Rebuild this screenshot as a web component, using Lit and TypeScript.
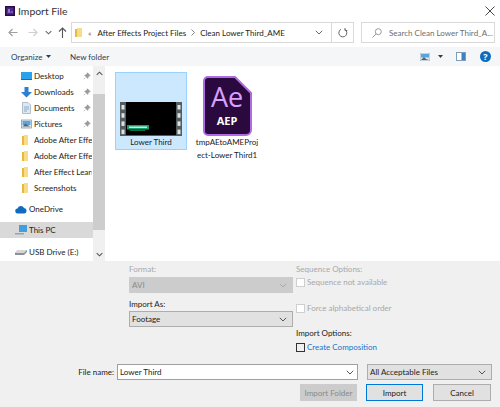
import { LitElement, css, html, svg } from 'lit'
import { customElement } from 'lit/decorators.js'

const folderIcon = svg`<svg class="ico" width="11" height="12" viewBox="0 0 11 12"><path d="M1 2h3l1 1v8H1z" fill="#e8b93f"/><path d="M3 1h4v10H3z" fill="#f7dc8a"/></svg>`

const navItems = [
  { label: 'Desktop', pin: true, icon: svg`<svg class="ico" width="11" height="12" viewBox="0 0 11 12"><rect x="0" y="2" width="11" height="7" fill="#2aa1ec"/><rect x="0" y="9" width="11" height="1" fill="#0f6fb5"/></svg>` },
  { label: 'Downloads', pin: true, icon: svg`<svg class="ico" width="11" height="12" viewBox="0 0 11 12"><path d="M3.500 1h4v5H11l-5.500 5.500L0 6h3.500z" fill="#2b80d5"/></svg>` },
  { label: 'Documents', pin: true, icon: svg`<svg class="ico" width="11" height="12" viewBox="0 0 11 12"><path d="M1.500 .5h5.500l2.500 2.500v8.500h-8z" fill="#dfe7ef" stroke="#9fb0c0" stroke-width=".8"/><path d="M3 5h5M3 7h5M3 9h3" stroke="#6f9fc8" stroke-width=".8"/></svg>` },
  { label: 'Pictures', pin: true, icon: svg`<svg class="ico" width="11" height="12" viewBox="0 0 11 12"><rect x=".4" y="2" width="10" height="8" fill="#dfe8ef" stroke="#8c9aa6" stroke-width=".8"/><rect x="1.500" y="3" width="8" height="4" fill="#5aa6dc"/><path d="M1.500 8.500l3-3 2 1.500 3 1.500z" fill="#56636e"/></svg>` },
  { label: 'Adobe After Effects 2020', icon: folderIcon },
  { label: 'Adobe After Effects CC', icon: folderIcon },
  { label: 'After Effect Learning', icon: folderIcon },
  { label: 'Screenshots', icon: folderIcon },
]

const pin = svg`<svg class="pin" width="8" height="8" viewBox="0 0 10 10"><path d="M5.500 1l3.500 3.500-1 .5-1.500 1-.5 2-4-4 2-.5 1-1.500zM3 7L1 9" fill="#9a9a9a" stroke="#8f8f8f" stroke-width=".7"/></svg>`

const chevron = svg`<svg class="chev" width="8" height="5" viewBox="0 0 8 5"><path d="M.8 .8L4 4l3.200-3.200" fill="none" stroke="#555" stroke-width="1"/></svg>`

@customElement('app-root')
class AppRoot extends LitElement {
  strip(x: number) {
    return [0, 1, 2, 3].map((i) => svg`<rect x=${x + 1.5} y=${3 + i * 8.2} width="3" height="4.500" fill="#dde3e6"/>`)
  }

  render() {
    return html`
      <div class="title">
        <svg width="10" height="10" viewBox="0 0 10 10"><rect width="10" height="10" fill="#2a0b4a"/><rect x="1.500" y="1.500" width="7" height="7" fill="#4b2a8a"/><path d="M3 7l1-4 1 4M6 6h2" stroke="#c9a2ff" fill="none" stroke-width=".7"/></svg>
        <span>Import File</span>
        <svg class="close" width="10" height="10" viewBox="0 0 10 10"><path d="M.5 .5l9 9M9.500 .5l-9 9" stroke="#333" stroke-width=".9"/></svg>
      </div>

      <div class="address">
        <div class="navs">
          <svg width="10" height="9" viewBox="0 0 10 9"><path d="M9.500 4.500H1M4.500 1L1 4.500 4.500 8" fill="none" stroke="#a0a0a0" stroke-width="1.200"/></svg>
          <svg class="fwd" width="10" height="9" viewBox="0 0 10 9"><path d="M.5 4.500H9M5.500 1L9 4.500 5.500 8" fill="none" stroke="#d0d0d0" stroke-width="1.200"/></svg>
          <svg class="down" width="7" height="5" viewBox="0 0 8 5"><path d="M.8 .8L4 4l3.200-3.200" fill="none" stroke="#666" stroke-width="1.200"/></svg>
          <svg class="up" width="9" height="11" viewBox="0 0 9 11"><path d="M4.500 11V1M1 4.500L4.500 1 8 4.500" fill="none" stroke="#555" stroke-width="1.100"/></svg>
        </div>
        <div class="box path">
          <svg width="8" height="10" viewBox="0 0 8 10"><path d="M0 1h2v8H0z" fill="#e8b93f"/><path d="M2 0h5v9H2z" fill="#f7dc8a"/></svg>
          <span class="crumbs dim">«</span>
          <span class="crumb">After Effects Project Files</span>
          <svg class="sep" width="4" height="7" viewBox="0 0 4 7"><path d="M.5 .5l3 3-3 3" fill="none" stroke="#666" stroke-width=".8"/></svg>
          <span class="crumb">Clean Lower Third_AME</span>
          <svg class="pathchev" width="8" height="5" viewBox="0 0 8 5"><path d="M.8 .8L4 4l3.200-3.200" fill="none" stroke="#666" stroke-width="1"/></svg>
          <div class="refresh">
            <svg width="10" height="10" viewBox="0 0 10 10"><path d="M3 1.300A4 4 0 1 0 7 1.500M7 0v2.500h2.300" fill="none" stroke="#666" stroke-width="1"/></svg>
          </div>
        </div>
        <div class="box search">
          <svg width="10" height="10" viewBox="0 0 10 10"><circle cx="6.300" cy="3.700" r="3" fill="none" stroke="#999"/><path d="M4 6L.5 9.500" stroke="#999"/></svg>
          <span>Search Clean Lower Third_A...</span>
        </div>
      </div>

      <div class="toolbar">
        <span class="organize">Organize</span>
        <svg class="caret" width="5" height="3" viewBox="0 0 5 3"><path d="M0 0h5L2.500 3z" fill="#1f3f60"/></svg>
        <span class="newfolder">New folder</span>
        <div class="tools">
          <svg width="10" height="8" viewBox="0 0 10 8"><rect width="10" height="8" fill="#dfe8ef" stroke="#8c9aa6" stroke-width=".6"/><rect x="1" y="1" width="8" height="3.500" fill="#5aa6dc"/><path d="M1 7l3-3 2 2 3 1z" fill="#56636e"/></svg>
          <svg class="tcaret" width="5" height="3" viewBox="0 0 5 3"><path d="M0 0h5L2.500 3z" fill="#1f3f60"/></svg>
          <svg class="panes" width="10" height="9" viewBox="0 0 10 9"><rect x=".5" y=".5" width="9" height="8" fill="#fff" stroke="#7f9db9"/><rect x="5.500" y="1" width="3.500" height="7" fill="#3f80c0"/></svg>
          <svg class="help" width="11" height="11" viewBox="0 0 11 11"><circle cx="5.500" cy="5.500" r="5.500" fill="#0f6cbd"/><text x="5.500" y="8.800" text-anchor="middle" font-size="9" font-weight="700" fill="#fff" font-family="Open Sans, sans-serif">?</text></svg>
        </div>
      </div>

      <div class="main">
        <div class="side">
          <div class="list">
            ${navItems.map(
              (n) => html`<div class="nav">${n.icon}<span class="lbl">${n.label}</span>${n.pin ? pin : ''}</div>`
            )}
            <div class="nav root first">
              <svg class="ico" width="12" height="9" viewBox="0 0 12 9"><path d="M3 8.500a2.500 2.500 0 0 1-.5-5A3.500 3.500 0 0 1 9 3a2.800 2.800 0 0 1 .5 5.500z" fill="#0f6cbd"/></svg>
              <span class="lbl">OneDrive</span>
            </div>
            <div class="nav root sel">
              <svg class="ico" width="12" height="11" viewBox="0 0 12 11"><rect x="4" y="0" width="8" height="7" fill="#3f9fe0"/><path d="M0 8h9v1.500H0z" fill="#9aa3aa"/></svg>
              <span class="lbl">This PC</span>
            </div>
            <div class="nav root usb">
              <svg class="ico" width="12" height="6" viewBox="0 0 12 6"><path d="M0 4l3-3h9v2L9 6H0z" fill="#8e9296"/><path d="M3 1h9L9 4H0z" fill="#d4d6d8"/></svg>
              <span class="lbl">USB Drive (E:)</span>
            </div>
          </div>
          <div class="scroll">
            <svg width="7" height="5" viewBox="0 0 8 5"><path d="M.8 4.200L4 1l3.200 3.200" fill="none" stroke="#555" stroke-width="1.200"/></svg>
            <div class="thumb"></div>
            <svg width="7" height="5" viewBox="0 0 8 5"><path d="M.8 .8L4 4l3.200-3.200" fill="none" stroke="#555" stroke-width="1.200"/></svg>
          </div>
        </div>
        <div class="files">
          <div class="tile selected">
            <svg class="film" width="62" height="34" viewBox="0 0 62 34">
              <rect width="62" height="34" fill="#555c5e"/>
              <rect x="6" width="50" height="33" fill="#000"/>
              ${this.strip(0)}
              ${this.strip(56)}
              <rect x="7" y="23" width="22" height="4.500" fill="#14a06a"/>
              <rect x="9" y="24.500" width="18" height="1.500" fill="#c9f0dd"/>
              <rect x="10" y="28" width="15" height="1" fill="#0d6d49"/>
            </svg>
            <div class="name">Lower Third</div>
          </div>
          <div class="tile">
            <svg class="ae" width="49" height="60" viewBox="0 0 49 60">
              <path d="M5 1h27l16 16v37a5 5 0 0 1-5 5H5a4 4 0 0 1-4-4V5a4 4 0 0 1 4-4z" fill="#2a0a3e" stroke="#b06be0" stroke-width="2"/>
              <text x="24" y="31" text-anchor="middle" font-size="27" font-weight="500" fill="#d9a0ff" font-family="Open Sans, sans-serif">Ae</text>
              <text x="24" y="49" text-anchor="middle" font-size="11" font-weight="700" fill="#fff" font-family="Open Sans, sans-serif">AEP</text>
            </svg>
            <div class="name two">tmpAEtoAMEProj<br />ect-Lower Third1</div>
          </div>
        </div>
      </div>

      <div class="panel">
        <div class="opts">
          <div class="col left">
            <div class="cap off">Format:</div>
            <div class="select off-sel"><span>AVI</span>${chevron}</div>
            <div class="cap second">Import As:</div>
            <div class="select"><span>Footage</span>${chevron}</div>
          </div>
          <div class="col right">
            <div class="cap off">Sequence Options:</div>
            <label class="check off seq"><i></i>Sequence not available</label>
            <label class="check off force"><i></i>Force alphabetical order</label>
            <div class="cap imp">Import Options:</div>
            <label class="check on"><i></i>Create Composition</label>
          </div>
        </div>
        <div class="namerow">
          <span class="fl">File name:</span>
          <div class="input"><span>Lower Third</span>${chevron}</div>
          <div class="select types"><span>All Acceptable Files</span>${chevron}</div>
        </div>
        <div class="buttons">
          <div class="btn disabled">Import Folder</div>
          <div class="btn primary">Import</div>
          <div class="btn">Cancel</div>
        </div>
      </div>
    `
  }

  static styles = css`
    :host {
      display: block;
      width: 500px;
      height: 407px;
      overflow: hidden;
      background: #fff;
      color: #222;
      font-family: 'Lato', 'Open Sans', sans-serif;
      font-size: 8px;
      line-height: 12px;
    }
    svg {
      display: block;
      flex: none;
    }
    .title {
      height: 22px;
      display: flex;
      align-items: center;
      padding: 0 5px;
      font-size: 10.4px;
      color: #333;
    }
    .title span {
      margin-left: 3px;
    }
    .close {
      margin-left: auto;
    }
    .address {
      height: 21px;
      display: flex;
      align-items: stretch;
      padding-right: 5px;
    }
    .navs {
      width: 71px;
      display: flex;
      align-items: center;
      padding-left: 8px;
      box-sizing: border-box;
    }
    .fwd {
      margin-left: 10px;
    }
    .down {
      margin-left: 7px;
    }
    .up {
      margin-left: 6px;
    }
    .box {
      border: 1px solid #d9d9d9;
      box-sizing: border-box;
      display: flex;
      align-items: center;
    }
    .path {
      width: 283px;
      padding-left: 3px;
    }
    .dim {
      margin: 0 6px 0 5px;
      color: #666;
    }
    .sep {
      margin: 0 5px;
    }
    .pathchev {
      margin-left: auto;
      margin-right: 8px;
    }
    .refresh {
      width: 21px;
      align-self: stretch;
      border-left: 1px solid #d9d9d9;
      display: flex;
      align-items: center;
      justify-content: center;
    }
    .search {
      width: 134px;
      margin-left: 7px;
      padding-left: 10px;
      color: #6d6d6d;
    }
    .search span {
      margin-left: 7px;
      white-space: nowrap;
    }
    .toolbar {
      margin-top: 4px;
      height: 19px;
      background: #f5f6f7;
      display: flex;
      align-items: center;
      padding: 0 9px 0 11px;
      color: #1f3f60;
    }
    .organize {
      width: 33px;
    }
    .caret {
      margin-left: 2px;
    }
    .newfolder {
      margin-left: 19px;
    }
    .tools {
      margin-left: auto;
      display: flex;
      align-items: center;
    }
    .tcaret {
      margin-left: 8px;
    }
    .panes {
      margin-left: 13px;
    }
    .help {
      margin-left: 14px;
    }
    .main {
      height: 195px;
      display: flex;
    }
    .side {
      width: 105px;
      display: flex;
      flex: none;
    }
    .list {
      width: 93px;
      padding-top: 2px;
      overflow: hidden;
      box-sizing: border-box;
      flex: none;
    }
    .nav {
      height: 16px;
      display: flex;
      align-items: center;
      padding-left: 21px;
      position: relative;
      white-space: nowrap;
      color: #222;
    }
    .ico {
      margin-right: 2px;
    }
    .lbl {
      overflow: hidden;
      width: 58px;
      flex: none;
    }
    .pin {
      position: absolute;
      left: 83px;
      top: 4px;
    }
    .root {
      padding-left: 15px;
    }
    .first {
      margin-top: 5px;
    }
    .sel {
      margin-top: 5px;
      background: #d9d9d9;
    }
    .usb {
      margin-top: 6px;
    }
    .scroll {
      width: 12px;
      display: flex;
      flex-direction: column;
      align-items: center;
      padding-top: 5px;
      box-sizing: border-box;
      background: #f0f0f0;
    }
    .thumb {
      width: 100%;
      height: 136px;
      margin: 18px 0 0;
      background: #cdcdcd;
    }
    .scroll svg:last-child {
      margin-top: 22px;
    }
    .files {
      display: flex;
      align-items: flex-start;
      padding: 6px 0 0 10px;
      gap: 4px;
    }
    .tile {
      width: 72px;
      height: 78px;
      box-sizing: border-box;
      border: 1px solid transparent;
      text-align: center;
      display: flex;
      flex-direction: column;
      align-items: center;
      justify-content: flex-end;
    }
    .selected {
      background: #cce8ff;
      border-color: #99d1ff;
    }
    .name {
      height: 13px;
      line-height: 13px;
      white-space: nowrap;
    }
    .ae {
      margin-top: 3px;
    }
    .tile:not(.selected) {
      justify-content: flex-start;
    }
    .two {
      margin-top: 0;
      line-height: 13px;
      height: 26px;
    }
    .panel {
      height: 146px;
      background: #f0f0f0;
      box-sizing: border-box;
      padding-top: 2px;
    }
    .opts {
      height: 93px;
      display: flex;
      padding-left: 129px;
    }
    .col {
      display: flex;
      flex-direction: column;
    }
    .left {
      width: 164px;
    }
    .right {
      margin-left: 3px;
    }
    .cap {
      height: 12px;
    }
    .off {
      color: #a8a8a8;
    }
    .select {
      height: 16px;
      box-sizing: border-box;
      border: 1px solid #adadad;
      background: #e1e1e1;
      display: flex;
      align-items: center;
      justify-content: space-between;
      padding: 0 5px 0 2px;
      margin-top: 2px;
    }
    .off-sel {
      background: #cccccc;
      border-color: #cccccc;
      color: #8a8a8a;
    }
    .off-sel .chev path {
      stroke: #aaa;
    }
    .second {
      margin-top: 5px;
    }
    .second + .select {
      margin-top: 1px;
    }
    .check {
      display: flex;
      align-items: center;
      height: 12px;
    }
    .check i {
      background: #fff;
      border: 1px solid #cfcfcf;
      margin-right: 2px;
      width: 7px;
      height: 7px;
    }
    .seq {
      margin-top: 1px;
    }
    .force {
      margin-top: 14px;
    }
    .imp {
      margin-top: 13px;
    }
    .on {
      margin-top: 2px;
      color: #1a73c9;
    }
    .on i {
      border-color: #333;
      background: #f0f0f0;
    }
    .namerow {
      display: flex;
      align-items: center;
      height: 16px;
      margin-top: 8px;
    }
    .fl {
      width: 117px;
      padding-right: 3px;
      box-sizing: border-box;
      text-align: right;
    }
    .input {
      width: 241px;
      height: 16px;
      box-sizing: border-box;
      border: 1px solid #a0a0a0;
      background: #fff;
      display: flex;
      align-items: center;
      justify-content: space-between;
      padding: 0 3px 0 2px;
    }
    .types {
      width: 125px;
      margin: 0 0 0 9px;
    }
    .buttons {
      display: flex;
      margin-top: 4px;
      padding-left: 300px;
    }
    .btn {
      width: 57px;
      height: 17px;
      box-sizing: border-box;
      border: 1px solid #adadad;
      background: #e1e1e1;
      display: flex;
      align-items: center;
      justify-content: center;
    }
    .disabled {
      background: #cccccc;
      border-color: #cccccc;
      color: #8a8a8a;
    }
    .primary {
      margin-left: 9px;
      border-color: #0078d7;
    }
    .btn:last-child {
      margin-left: 10px;
      width: 58px;
    }
  `
}
